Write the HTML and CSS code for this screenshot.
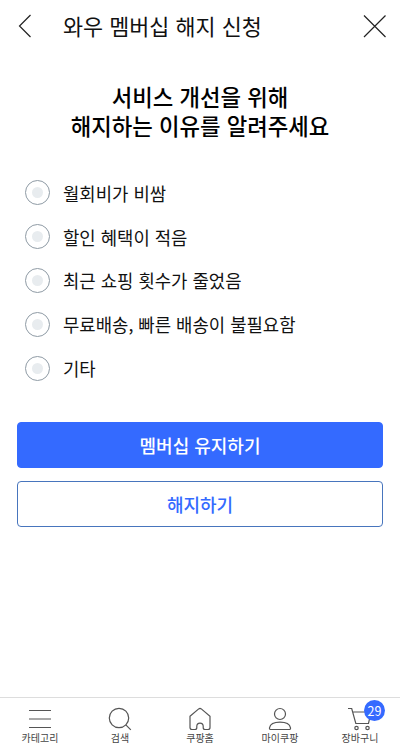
FILE: index.html
```html
<!DOCTYPE html>
<html lang="ko">
<head>
<meta charset="utf-8">
<meta name="viewport" content="width=device-width, initial-scale=1">
<title>와우 멤버십 해지 신청</title>
<link rel="stylesheet" href="styles.css">
</head>
<body>
<div class="screen">
  <header class="topbar">
    <svg class="back" width="14" height="24" viewBox="0 0 14 24"><path d="M12.5 1 1.5 12l11 11"/></svg>
    <h1 class="title">와우 멤버십 해지 신청</h1>
    <svg class="close" width="24" height="24" viewBox="0 0 24 24"><path d="M1 1.5l21.500 21.500M22.500 1.500L1 23"/></svg>
  </header>
  <main class="content">
    <h2 class="question">서비스 개선을 위해<br>해지하는 이유를 알려주세요</h2>
    <ul class="reasons">
      <li class="reason"><span class="radio"></span><span>월회비가 비쌈</span></li>
      <li class="reason"><span class="radio"></span><span>할인 혜택이 적음</span></li>
      <li class="reason"><span class="radio"></span><span>최근 쇼핑 횟수가 줄었음</span></li>
      <li class="reason"><span class="radio"></span><span>무료배송, 빠른 배송이 불필요함</span></li>
      <li class="reason"><span class="radio"></span><span>기타</span></li>
    </ul>
    <div class="actions">
      <button class="btn primary">멤버십 유지하기</button>
      <button class="btn outline">해지하기</button>
    </div>
  </main>
  <nav class="tabs">
    <a class="tab"><svg width="24" height="24" viewBox="0 0 24 24"><path d="M1 3.500h22M1 12h22M1 20.500h22"/></svg><span>카테고리</span></a>
    <a class="tab"><svg width="24" height="24" viewBox="0 0 24 24"><circle cx="11" cy="11" r="9.700"/><path d="M17.800 17.800l5 5"/></svg><span>검색</span></a>
    <a class="tab"><svg width="24" height="24" viewBox="0 0 24 24"><path d="M2 9.300 10.700 1.900q1.300-1 2.600 0L22 9.300V20.500q0 2-2 2h-3q-1.800 0-1.800-2v-1.200a3.200 3.200 0 0 0-6.400 0v1.200q0 2-1.800 2H4q-2 0-2-2z"/></svg><span>쿠팡홈</span></a>
    <a class="tab"><svg width="24" height="24" viewBox="0 0 24 24"><circle cx="12" cy="7" r="5.500"/><path d="M3 22.500q-1.800 0-1.500-1.700C2.200 17 6.500 15.200 12 15.200s9.800 1.800 10.500 5.600q.3 1.700-1.500 1.700z"/></svg><span>마이쿠팡</span></a>
    <a class="tab"><svg width="24" height="24" viewBox="0 0 24 24"><path d="M0 1.500h3.700L7.800 16.500H20.500L23 5H4.800"/><circle cx="8.500" cy="21" r="1.700"/><circle cx="19.500" cy="21" r="1.700"/></svg><span>장바구니</span><b class="badge">29</b></a>
  </nav>
</div>
</body>
</html>
```
FILE: styles.css
```css
* { box-sizing: border-box; margin: 0; padding: 0; }
body {
  background: #fff;
  color: #111;
  font-family: "Noto Sans CJK KR", sans-serif;
}
svg { display: block; fill: none; stroke: #222; stroke-width: 1.2; flex: none; }
.screen { display: flex; flex-direction: column; height: 747px; overflow: hidden; }
.topbar { display: flex; align-items: center; height: 52px; padding: 0 13px 0 18px; }
.title { flex: 1; margin-left: 31px; font-size: 21.8px; font-weight: 400; line-height: 32px; white-space: nowrap; }
.content { flex: 1; padding: 30px 17px 0; }
.question {
  color: #000;
  font-size: 22.3px;
  font-weight: 500;
  line-height: 29px;
  text-align: center;
  white-space: nowrap;
}
.reasons { list-style: none; margin-top: 31px; padding-left: 8px; }
.reason { display: flex; align-items: center; gap: 13px; height: 43.800px; font-size: 17.8px; line-height: 26px; white-space: nowrap; }
.radio {
  display: flex;
  align-items: center;
  justify-content: center;
  width: 25px;
  height: 25px;
  border: 1px solid #8f9ba5;
  border-radius: 50%;
}
.radio::after { content: ""; width: 11px; height: 11px; border-radius: 50%; background: #e8ecef; }
.actions { display: flex; flex-direction: column; gap: 13px; margin-top: 32px; }
.btn {
  height: 46px;
  border: 1px solid #346aff;
  border-radius: 4px;
  font-family: inherit;
  font-size: 18px;
  font-weight: 500;
  line-height: 26px;
}
.primary { background: #346aff; color: #fff; }
.outline { background: #fff; color: #346aff; border-color: #4775bd; }
.tabs { display: flex; height: 50px; border-top: 1px solid #ddd; }
.tab {
  position: relative;
  flex: 1;
  display: flex;
  flex-direction: column;
  align-items: center;
  padding-top: 9px;
  color: #444;
  font-size: 10px;
  line-height: 14px;
}
.tab svg { stroke: #555; }
.badge {
  position: absolute;
  top: 2px;
  left: 44px;
  width: 21px;
  height: 21px;
  border-radius: 50%;
  background: #346aff;
  color: #fff;
  font-size: 12.5px;
  font-weight: 400;
  line-height: 21px;
  text-align: center;
}
```
